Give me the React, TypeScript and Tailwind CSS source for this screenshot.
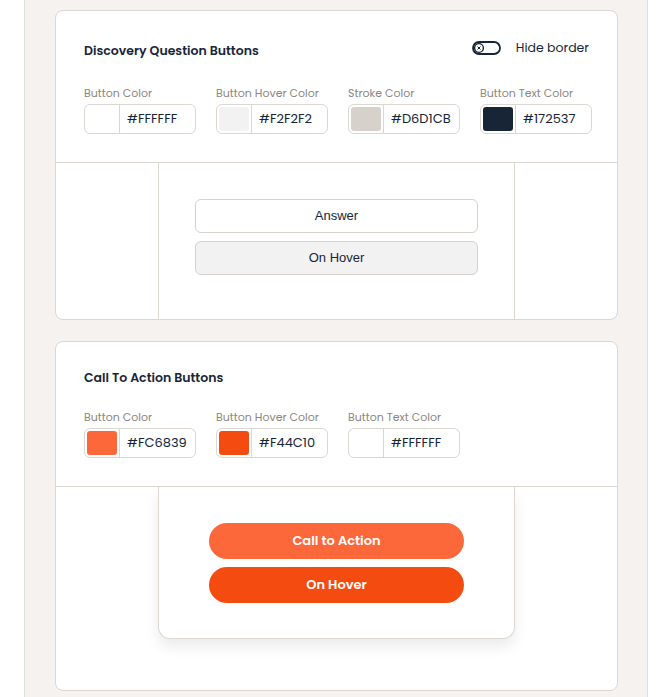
import React from 'react'

const font = { fontFamily: '"Poppins", Inter, "Noto Sans", sans-serif' }

function ColorField({ label, color }: { label: string; color: string }) {
  return (
    <div className="flex flex-col">
      <span className="text-[11px] leading-4 text-[#8b8682]">{label}</span>
      <div className="mt-[3px] flex h-[30px] w-[112px] items-center rounded-md border border-[#dcd7d1] bg-white">
        <div className="flex h-full w-[35px] items-center justify-center border-r border-[#dcd7d1] p-[2px]">
          <div className="h-full w-full rounded-[3px]" style={{ backgroundColor: color }} />
        </div>
        <span className="pl-[7px] text-[13px] text-[#172537]">{color}</span>
      </div>
    </div>
  )
}

function ToggleIcon() {
  return (
    <svg width="29" height="14" viewBox="0 0 29 14" fill="none">
      <rect x="1" y="1" width="27" height="12" rx="6" fill="white" stroke="#172537" strokeWidth="1.8" />
      <circle cx="7" cy="7" r="4.4" stroke="#172537" strokeWidth="1.4" />
      <path d="M5.5 5.5 L8.5 8.5 M8.5 5.5 L5.5 8.5" stroke="#172537" strokeWidth="1" />
    </svg>
  )
}

export default function App() {
  return (
    <div className="min-h-screen bg-white" style={font}>
      <div className="ml-[24px] min-h-[697px] w-[624px] border-x border-[#e3dfdb] bg-[#f6f2ef] pl-[30px] pr-[29px] pt-[10px]">
        {/* Discovery Question Buttons */}
        <div className="overflow-hidden rounded-lg border border-[#dcd7d1] bg-white">
          <div className="px-7 pb-7 pt-[28px]">
            <div className="flex h-[22px] items-center justify-between">
              <h2 className="mt-[2px] text-[12.5px] font-semibold text-[#172537]">Discovery Question Buttons</h2>
              <div className="-mt-[4px] flex items-center gap-[15px]">
                <ToggleIcon />
                <span className="text-[12.5px] text-[#172537]">Hide border</span>
              </div>
            </div>
            <div className="mt-[24px] flex gap-5">
              <ColorField label="Button Color" color="#FFFFFF" />
              <ColorField label="Button Hover Color" color="#F2F2F2" />
              <ColorField label="Stroke Color" color="#D6D1CB" />
              <ColorField label="Button Text Color" color="#172537" />
            </div>
          </div>
          <div className="flex justify-center border-t border-[#dcd7d1]">
            <div className="flex h-[156px] w-[357px] flex-col gap-2 border-x border-[#dcd7d1] px-[36px] pt-[36px]">
              <button className="h-[34px] w-[283px] rounded-md border border-[#d6d1cb] bg-white text-[13px] text-[#172537]" style={{ fontFamily: '"Liberation Sans", Arial, sans-serif' }}>
                Answer
              </button>
              <button className="h-[34px] w-[283px] rounded-md border border-[#d6d1cb] bg-[#f2f2f2] text-[13px] text-[#172537]" style={{ fontFamily: '"Liberation Sans", Arial, sans-serif' }}>
                On Hover
              </button>
            </div>
          </div>
        </div>

        {/* Call To Action Buttons */}
        <div className="mt-[21px] overflow-hidden rounded-lg border border-[#dcd7d1] bg-white">
          <div className="px-7 pb-7 pt-[26px]">
            <h2 className="text-[12.5px] font-semibold leading-5 text-[#172537]">Call To Action Buttons</h2>
            <div className="mt-[21px] flex gap-5">
              <ColorField label="Button Color" color="#FC6839" />
              <ColorField label="Button Hover Color" color="#F44C10" />
              <ColorField label="Button Text Color" color="#FFFFFF" />
            </div>
          </div>
          <div className="flex h-[204px] justify-center border-t border-[#dcd7d1]">
            <div className="flex h-[152px] w-[357px] flex-col items-center gap-2 rounded-b-xl border-x border-b border-[#dcd7d1] pt-[36px] shadow-[0_8px_14px_rgba(0,0,0,0.08)]">
              <button className="h-[36px] w-[255px] rounded-full bg-[#fc6839] text-[13px] font-semibold text-white">
                Call to Action
              </button>
              <button className="h-[36px] w-[255px] rounded-full bg-[#f44c10] text-[13px] font-semibold text-white">
                On Hover
              </button>
            </div>
          </div>
        </div>
      </div>
    </div>
  )
}
